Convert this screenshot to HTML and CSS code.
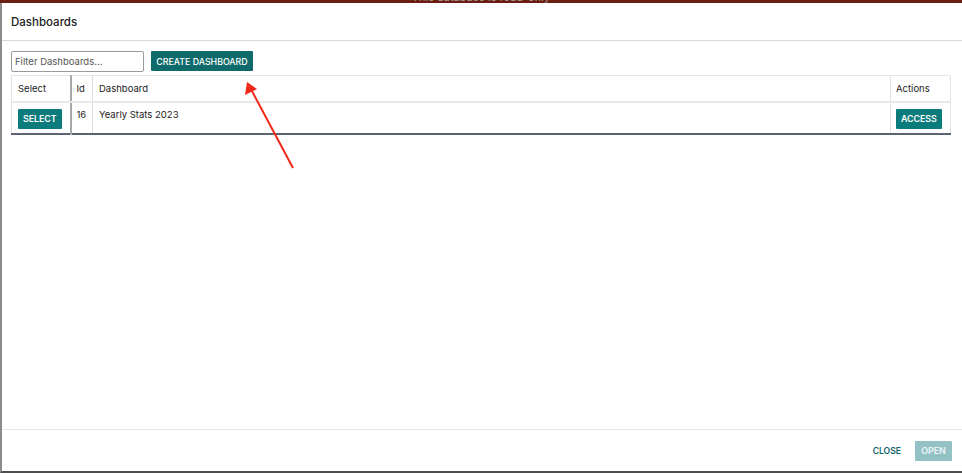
FILE: index.html
```html
<!DOCTYPE html>
<html lang="en">
<head>
  <meta charset="UTF-8" />
  <title>Dashboards</title>
  <link rel="stylesheet" href="styles.css">
</head>
<body>
  <div class="topbar"><span>This database is read-only</span></div>
  <div class="dialog">
    <div class="dialog-header">Dashboards</div>

    <div class="dialog-body">
      <div class="toolbar">
        <input type="text" class="filter" placeholder="Filter Dashboards..." />
        <button class="btn create">Create Dashboard</button>
      </div>

      <table class="grid">
        <thead>
          <tr>
            <th class="col-select">Select</th>
            <th class="col-id">Id</th>
            <th>Dashboard</th>
            <th class="col-actions">Actions</th>
          </tr>
        </thead>
        <tbody>
          <tr>
            <td class="col-select"><button class="btn small">Select</button></td>
            <td class="col-id text">16</td>
            <td class="text">Yearly Stats 2023</td>
            <td class="col-actions"><button class="btn small">Access</button></td>
          </tr>
        </tbody>
      </table>
    </div>

    <div class="dialog-footer">
      <button class="link">Close</button>
      <button class="btn open">Open</button>
    </div>
  </div>

  <svg class="arrow" width="962" height="473" viewBox="0 0 962 473">
    <line x1="293" y1="168" x2="252" y2="91" stroke="#f02a1a" stroke-width="2" />
    <polygon points="247,82 245,95 257,89" fill="#f02a1a" />
  </svg>
</body>
</html>
```

FILE: styles.css
```css
body { margin: 0; height: 473px; overflow: hidden; font-family: Inter, "Noto Sans", Arial, sans-serif; color: #222; background: #fff; }
.topbar { height: 3px; background: #6b1d12; overflow: hidden; text-align: center; }
.topbar span { display: block; font-size: 11px; line-height: 11px; margin-top: -8px; color: #a89a96; }
.dialog { height: 468px; border-left: 2px solid #8c8c8c; border-bottom: 2px solid #4e4e4e; display: flex; flex-direction: column; }
.dialog-header { height: 37px; flex: none; display: flex; align-items: center; padding-left: 9px; font-size: 11.5px; font-weight: 500; border-bottom: 1px solid #d8d8d8; }
.dialog-body { flex: 1; padding: 10px 9px 0 9px; }
.toolbar { display: flex; gap: 7px; align-items: flex-start; }
.filter { width: 133px; height: 21px; box-sizing: border-box; border: 1px solid #9a9a9a; border-radius: 2px; padding: 0 3px; font-family: inherit; font-size: 9.5px; color: #333; }
.filter::placeholder { color: #555; }
.btn { border: none; border-radius: 1px; color: #fff; font-family: inherit; font-size: 8.8px; font-weight: 600; text-transform: uppercase; cursor: pointer; padding: 0; }
.btn.create { background: #0f6b6b; height: 20px; width: 102px; font-weight: 500; }
.btn.small { background: #0b7c7b; height: 20px; padding: 0 5px; }
.grid { width: 940px; table-layout: fixed; border-collapse: collapse; margin-top: 3px; font-size: 9.5px; border-left: 1px solid #e2e2e2; border-right: 1px solid #e2e2e2; border-bottom: 2px solid #5c6370; }
.grid th, .grid td { box-sizing: border-box; }
.grid th { text-align: left; font-weight: 400; height: 26px; padding: 0 6px; border-top: 1px solid #e6e6e6; border-bottom: 2px solid #e8e8ea; }
.grid td { height: 32px; padding: 6px 6px 0; vertical-align: top; }
.grid td.text { padding-top: 6px; }
.grid .col-select { width: 59px; border-right: 2px solid #a8a8a8; }
.grid .col-id { width: 22px; border-right: 1px solid #dcdcdc; padding: 0 5px; }
.grid td.col-id { padding-top: 6px; }
.grid .col-actions { width: 60px; border-left: 1px solid #e2e2e2; padding-left: 5px; padding-right: 5px; }
.dialog-footer { height: 41px; flex: none; border-top: 1px solid #e6e6e6; display: flex; justify-content: flex-end; align-items: center; gap: 14px; padding-right: 10px; }
.link { background: none; border: none; color: #10656a; font-family: inherit; font-size: 8.6px; font-weight: 600; text-transform: uppercase; padding: 0; }
.btn.open { background: #93c1c5; height: 20px; width: 37px; color: #eef5f6; }
.arrow { position: absolute; left: 0; top: 0; pointer-events: none; }
```
